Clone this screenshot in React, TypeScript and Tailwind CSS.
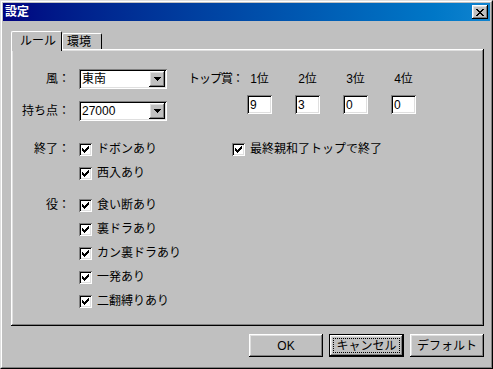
import React from 'react';

const RAISED = 'shadow-[inset_-1px_-1px_#000,inset_1px_1px_#fff,inset_-2px_-2px_#808080,inset_2px_2px_#dfdfdf]';
const SUNKEN = 'shadow-[inset_1px_1px_#808080,inset_-1px_-1px_#fff,inset_2px_2px_#000,inset_-2px_-2px_#dfdfdf]';

const CHECK = ['......X', '.....XX', 'X...XXX', 'XX.XXX.', 'XXXXX..', '.XXX...', '..X....'];
const ARROW = ['XXXXXXX', '.XXXXX.', '..XXX..', '...X...'];
const CLOSE = ['XX....XX', '.XX..XX.', '..XXXX..', '...XX...', '..XXXX..', '.XX..XX.', 'XX....XX'];

function Pixels({ rows }: { rows: string[] }) {
  const w = rows[0].length;
  return (
    <svg className="block" width={w} height={rows.length} viewBox={`0 0 ${w} ${rows.length}`} shapeRendering="crispEdges">
      {rows.flatMap((r, y) =>
        r.split('').map((c, x) => (c === 'X' ? <rect key={`${x}-${y}`} x={x} y={y} width={1} height={1} fill="#000" /> : null))
      )}
    </svg>
  );
}

function Check() {
  return (
    <div className={`w-[13px] h-[13px] shrink-0 bg-white ${SUNKEN} flex items-center justify-center`}>
      <Pixels rows={CHECK} />
    </div>
  );
}

function Combo({ value }: { value: string }) {
  return (
    <div className={`w-[88px] h-[20px] bg-white ${SUNKEN} flex items-center pl-[3px] pr-[2px]`}>
      <span className="flex-1">{value}</span>
      <div className={`w-[16px] h-[16px] bg-[#c0c0c0] ${RAISED} flex items-center justify-center`}>
        <Pixels rows={ARROW} />
      </div>
    </div>
  );
}

function Field({ value }: { value: string }) {
  return <div className={`w-[25px] h-[19px] bg-white ${SUNKEN} flex items-center pl-[3px]`}>{value}</div>;
}

// one row of the left column: right-aligned label, checkbox, caption
function CheckRow({ label, text, children }: { label?: string; text: string; children?: React.ReactNode }) {
  return (
    <div className="flex items-center h-[24px]">
      <div className="w-[59px] text-right">{label}</div>
      <div className="w-[153px] ml-[9px] flex items-center">
        <Check />
        <span className="ml-[5px]">{text}</span>
      </div>
      {children}
    </div>
  );
}

export default function App() {
  const places = [
    { label: '1位', value: '9' },
    { label: '2位', value: '3' },
    { label: '3位', value: '0' },
    { label: '4位', value: '0' },
  ];

  return (
    <div className="w-[493px] h-[369px] bg-[#c0c0c0] text-[12px] leading-none text-black font-['Liberation_Sans','Noto_Sans_CJK_JP',sans-serif] border border-t-[#dfdfdf] border-l-[#dfdfdf] border-r-black border-b-black">
      <div className="h-full p-px flex flex-col border border-t-white border-l-white border-r-[#808080] border-b-[#808080]">
        {/* Title bar */}
        <div className="h-[18px] flex items-center justify-between pl-[2px] pr-[2px] bg-linear-to-r from-[#000080] to-[#1084d0]">
          <span className="text-white font-bold">設定</span>
          <div className={`w-[16px] h-[14px] bg-[#c0c0c0] ${RAISED} flex items-center justify-center`}>
            <Pixels rows={CLOSE} />
          </div>
        </div>

        <div className="pl-[8px] pr-[6px] pt-[10px] flex flex-col">
          {/* Tabs */}
          <div className="h-[18px] flex items-end">
            <div className="relative z-10 w-[51px] h-[20px] -mb-[2px] bg-[#c0c0c0] border-t border-l border-white border-r border-r-black rounded-t-[2px] flex items-start pt-[3px] pl-[8px]">
              ルール
            </div>
            <div className="w-[40px] h-[16px] bg-[#c0c0c0] border-t border-l border-white border-r border-r-black rounded-t-[2px] flex items-start pt-[2px] pl-[4px]">
              環境
            </div>
          </div>

          {/* Panel */}
          <div className={`w-[473px] h-[277px] ${RAISED} pt-[20px]`}>
            <div className="flex">
              <div className="flex flex-col gap-[12px]">
                <div className="flex items-center h-[20px]">
                  <div className="w-[59px] text-right">風：</div>
                  <div className="ml-[9px]">
                    <Combo value="東南" />
                  </div>
                </div>
                <div className="flex items-center h-[20px]">
                  <div className="w-[59px] text-right">持ち点：</div>
                  <div className="ml-[9px]">
                    <Combo value="27000" />
                  </div>
                </div>
              </div>

              <div className="ml-[21px] grid grid-cols-[59px_48px_48px_48px_48px] grid-rows-[20px_19px] gap-y-[6px]">
                <div className="flex items-center tracking-[-1px]">トップ賞：</div>
                {places.map((p) => (
                  <div key={p.label} className="w-[25px] flex items-center justify-center">
                    {p.label}
                  </div>
                ))}
                <div />
                {places.map((p) => (
                  <Field key={p.label} value={p.value} />
                ))}
              </div>
            </div>

            <div className="mt-[16px] flex flex-col">
              <CheckRow label="終了：" text="ドボンあり">
                <Check />
                <span className="ml-[5px]">最終親和了トップで終了</span>
              </CheckRow>
              <CheckRow text="西入あり" />
            </div>

            <div className="mt-[8px] flex flex-col">
              <CheckRow label="役：" text="食い断あり" />
              <CheckRow text="裏ドラあり" />
              <CheckRow text="カン裏ドラあり" />
              <CheckRow text="一発あり" />
              <CheckRow text="二翻縛りあり" />
            </div>
          </div>

          {/* Buttons */}
          <div className="mt-[8px] flex justify-end gap-[6px] pr-[-1px]">
            <div className={`w-[74px] h-[23px] ${RAISED} flex items-center justify-center`}>OK</div>
            <div className="w-[75px] h-[23px] border border-black">
              <div className={`h-full ${RAISED} p-[3px]`}>
                <div className="h-full border border-dotted border-black flex items-center justify-center">キャンセル</div>
              </div>
            </div>
            <div className={`w-[74px] h-[23px] ${RAISED} flex items-center justify-center`}>デフォルト</div>
          </div>
        </div>
      </div>
    </div>
  );
}
